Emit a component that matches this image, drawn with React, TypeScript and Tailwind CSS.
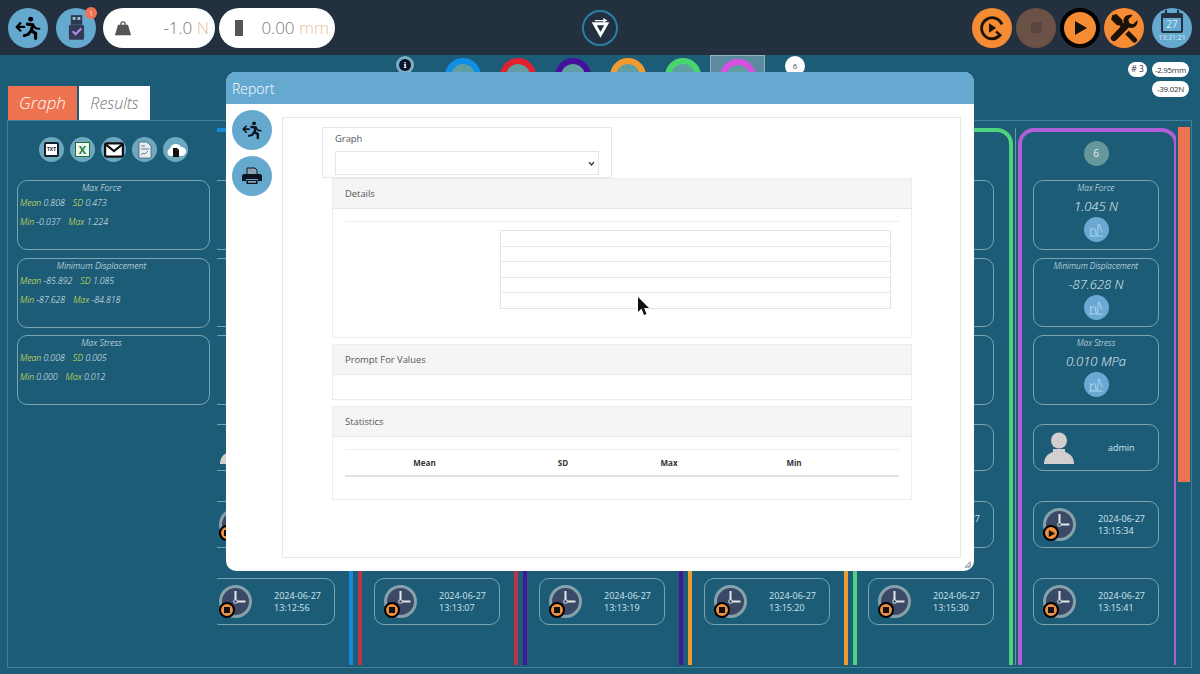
import { Fragment } from "react";

const rings = [
  "border-[#0f8fe6]",
  "border-[#e3202f]",
  "border-[#45109c]",
  "border-[#f39a2d]",
  "border-[#47d66e]",
  "border-[#d94fe2]",
];

const tints = [
  "border-[#1189dc]",
  "border-[#b8354a]",
  "border-[#43179a]",
  "border-[#ef9a33]",
  "border-[#4ed47f]",
  "border-[#b05fd6]",
];

const columns = [
  { force: "0.808 N", disp: "-85.892 N", stress: "0.008 MPa", start: "13:12:44", stop: "13:12:56", state: "stop" },
  { force: "1.224 N", disp: "-84.818 N", stress: "0.012 MPa", start: "13:12:58", stop: "13:13:07", state: "stop" },
  { force: "0.902 N", disp: "-85.310 N", stress: "0.009 MPa", start: "13:13:09", stop: "13:13:19", state: "stop" },
  { force: "-0.037 N", disp: "-86.204 N", stress: "0.000 MPa", start: "13:15:02", stop: "13:15:20", state: "stop" },
  { force: "0.873 N", disp: "-85.472 N", stress: "0.008 MPa", start: "13:15:22", stop: "13:15:30", state: "stop" },
  { force: "1.045 N", disp: "-87.628 N", stress: "0.010 MPa", start: "13:15:34", stop: "13:15:41", state: "play" },
];

const stats = [
  { title: "Max Force", mean: "0.808", sd: "0.473", min: "-0.037", max: "1.224" },
  { title: "Minimum Displacement", mean: "-85.892", sd: "1.085", min: "-87.628", max: "-84.818" },
  { title: "Max Stress", mean: "0.008", sd: "0.005", min: "0.000", max: "0.012" },
];

function ExitIcon({ className }: { className?: string }) {
  return (
    <svg viewBox="0 0 24 24" className={className} fill="none" stroke="currentColor" strokeLinecap="round" strokeLinejoin="round">
      <circle cx="14.5" cy="4" r="2.3" fill="currentColor" stroke="none" />
      <path d="M11.5 8.5l5 .5-1.5 5.5 4 2.5v4.5" strokeWidth="3" />
      <path d="M14.5 15l-2.5 3-3.5 1" strokeWidth="2.6" />
      <path d="M17 10l2.5 2.5 3 .2" strokeWidth="2" />
      <path d="M1.5 11h7M5 7.5L1.5 11 5 14.5" strokeWidth="2" />
    </svg>
  );
}

function ToolsIcon() {
  return (
    <svg viewBox="0 0 28 28" className="w-[30px] h-[30px]" fill="#1c1208">
      <path d="M26.500 6.500l-4 4-3.500-1-1-3.500 4-4c-3-1-6 0-7.500 2-1.200 1.800-1.300 3.800-.6 5.500L2.500 21.400a2.900 2.900 0 0 0 4.100 4.100L18.500 13.600c1.700.7 3.700.6 5.500-.6 2-1.500 3-3.500 2.500-6.500z" />
      <path d="M3 2l4-1 5.500 5.500v2l5 5-3 3-5-5h-2L2 6z" />
      <path d="M18.500 16.500l7 7a2.400 2.400 0 0 1-3.400 3.400l-7-7z" />
    </svg>
  );
}

function ChartIcon() {
  return (
    <svg viewBox="0 0 24 24" className="w-[18px] h-[18px] text-[#c4e4f4]" fill="none" stroke="currentColor" strokeWidth="1">
      <path d="M3 20h18M5 20V9M5 12c3 0 3-2 5-2s1 9 3 9 1-15 3-15 1 9 5 10" />
    </svg>
  );
}

function RoundIcon({ children }: { children: React.ReactNode }) {
  return <div className="w-[25px] h-[25px] rounded-full bg-[#6ea8bf] flex items-center justify-center">{children}</div>;
}

function Clock({ state }: { state: string }) {
  return (
    <div className="relative w-[33px] h-[33px] shrink-0 rounded-full border-[3px] border-[#87a1ab] bg-[#3a4a66]">
      <svg viewBox="0 0 27 27" className="w-full h-full" fill="none">
        <path d="M13.5 3v10.500h10" stroke="#e3e8ea" strokeWidth="2" />
        <circle cx="13.5" cy="13.5" r="1.8" fill="#3a4a66" stroke="#e3e8ea" />
      </svg>
      <div className="absolute -left-[3px] top-[14px] w-[16px] h-[16px] rounded-full bg-[#f0903f] border-2 border-black flex items-center justify-center">
        {state === "play" ? (
          <svg viewBox="0 0 10 10" className="w-[9px] h-[9px]">
            <path d="M2 1l7 4-7 4z" fill="#111" />
          </svg>
        ) : (
          <div className="w-[6px] h-[6px] bg-[#111]" />
        )}
      </div>
    </div>
  );
}

function TimeCard({ time, state }: { time: string; state: string }) {
  return (
    <div className="h-[47px] w-[126px] rounded-[10px] border border-[#7aa5ae] flex items-center pl-[9px]">
      <Clock state={state} />
      <div className="ml-[22px] text-[9px] leading-[12px] text-[#cfe6ee]">
        <div>2024-06-27</div>
        <div>{time}</div>
      </div>
    </div>
  );
}

function ValueCard({ title, value, height }: { title: string; value: string; height: string }) {
  return (
    <div className={`${height} w-[126px] rounded-[10px] border border-[#7aa5ae] flex flex-col items-center italic font-light text-[#e4f3f8]`}>
      <div className="text-[8.25px] leading-[12px] mt-[1px]">{title}</div>
      <div className="text-[13px] leading-[18px] mt-[3px]">{value}</div>
      <div className="mt-[2px] w-[25px] h-[25px] rounded-full bg-[#6aa9d3] flex items-center justify-center">
        <ChartIcon />
      </div>
    </div>
  );
}

function Column({ index, data }: { index: number; data: (typeof columns)[number] }) {
  return (
    <div
      className={`w-[160px] h-[537px] shrink-0 border-4 border-b-0 rounded-t-[16px] flex flex-col ${tints[index]} ${
        index === 0 ? "-ml-[24px]" : "ml-[5px]"
      } ${index < 4 ? "pl-[12px]" : "pl-[11px]"}`}
    >
      <div className="mt-[9px] w-[126px] flex justify-center">
        <div className="w-[25px] h-[25px] rounded-full bg-[#66979c] text-[#e5f1f0] text-[10px] flex items-center justify-center">
          {index + 1}
        </div>
      </div>
      <div className="mt-[14px]">
        <ValueCard title="Max Force" value={data.force} height="h-[70px]" />
      </div>
      <div className="mt-[8px]">
        <ValueCard title="Minimum Displacement" value={data.disp} height="h-[69px]" />
      </div>
      <div className="mt-[8px]">
        <ValueCard title="Max Stress" value={data.stress} height="h-[70px]" />
      </div>
      <div className="mt-[19px] h-[47px] w-[126px] rounded-[10px] border border-[#7aa5ae] flex items-center pl-[9px]">
        <svg viewBox="0 0 32 32" className="w-[32px] h-[32px] text-[#d3cfcf]" fill="currentColor">
          <circle cx="16" cy="8.500" r="8" />
          <path d="M1 32c0-6 3-10 9-12v-3h12v3c6 2 9 6 9 12z" />
        </svg>
        <div className="ml-[33px] text-[9px] text-[#cfe6ee]">admin</div>
      </div>
      <div className="mt-[30px]">
        <TimeCard time={data.start} state={data.state} />
      </div>
      <div className="mt-[30px]">
        <TimeCard time={data.stop} state="stop" />
      </div>
    </div>
  );
}

function StatCard({ item }: { item: (typeof stats)[number] }) {
  return (
    <div className="h-[70px] w-[193px] rounded-[10px] border border-[#7aa5ae] italic font-light text-[8.75px] text-[#e8f4f8] mb-[7.5px] px-[2px]">
      <div className="text-center leading-[12px] mt-[1px] pr-[24px]">{item.title}</div>
      <div className="mt-[3px] leading-[13px] flex gap-[8px]">
        <span>
          <span className="text-[#e4f250]">Mean</span> {item.mean}
        </span>
        <span>
          <span className="text-[#e4f250]">SD</span> {item.sd}
        </span>
      </div>
      <div className="mt-[6px] leading-[13px] flex gap-[8px]">
        <span>
          <span className="text-[#e4f250]">Min</span> {item.min}
        </span>
        <span>
          <span className="text-[#e4f250]">Max</span> {item.max}
        </span>
      </div>
    </div>
  );
}

function PanelHead({ label }: { label: string }) {
  return (
    <div className="h-[30px] shrink-0 bg-[#f5f5f5] border-b border-[#e6e6e6] pl-[12px] pt-[1px] flex items-center text-[9.4px] text-[#555]">
      {label}
    </div>
  );
}

export default function App() {
  return (
    <div className="w-[1200px] h-[674px] overflow-hidden flex flex-col font-['Open_Sans',sans-serif]">
      <header className="h-[55px] shrink-0 bg-[#22303f] flex items-center pl-[8px] pr-[8px]">
        <div className="w-[40px] h-[40px] rounded-full bg-[#65a9cf] flex items-center justify-center text-black">
          <ExitIcon className="w-[26px] h-[26px]" />
        </div>
        <div className="relative ml-[8px] w-[40px] h-[40px] rounded-full bg-[#65a9cf] flex items-center justify-center">
          <svg viewBox="0 0 20 28" className="w-[19px] h-[27px]">
            <rect x="4" y="1" width="12" height="10" fill="#2e3a4c" />
            <rect x="6" y="3" width="3" height="3" fill="#9fc6d8" />
            <rect x="11" y="3" width="3" height="3" fill="#9fc6d8" />
            <rect x="2" y="11" width="16" height="16" rx="2" fill="#343a56" />
            <path d="M6 18l3 3 6-6" fill="none" stroke="#b08be0" strokeWidth="2.2" />
          </svg>
          <div className="absolute right-[-1px] top-[-1px] w-[12px] h-[12px] rounded-full bg-[#ee7350] text-[8px] leading-[12px] text-center text-[#fde]">
            1
          </div>
        </div>
        <div className="ml-[7px] w-[112px] h-[40px] rounded-full bg-white flex items-center pl-[11px] pr-[6px]">
          <svg viewBox="0 0 20 20" className="w-[18px] h-[18px] text-[#555]" fill="currentColor" fillRule="evenodd">
            <path d="M7 5.500a3 3 0 1 1 6 0v1h2.500L19 18H1L4.500 6.500H7zM8.500 6.500h3v-1a1.500 1.500 0 0 0-3 0z" />
          </svg>
          <div className="ml-auto text-[17px] font-light text-[#777]">
            -1.0 <span className="text-[#eabf9c]">N</span>
          </div>
        </div>
        <div className="ml-[4px] w-[116px] h-[40px] rounded-full bg-white flex items-center pl-[16px] pr-[6px]">
          <div className="w-[8px] h-[16px] bg-[#555]" />
          <div className="ml-auto text-[17px] font-light text-[#777]">
            0.00 <span className="text-[#eabf9c]">mm</span>
          </div>
        </div>
        <div className="ml-[247px] w-[36px] h-[36px] rounded-full border-2 border-[#2a7fa8] flex items-center justify-center">
          <svg viewBox="0 0 20 20" className="w-[21px] h-[21px]" fill="none" stroke="#fff">
            <path d="M4.500 3.500h10M12.500 1.500l3 2-3 1" strokeWidth="1.1" />
            <path d="M4 6.500h12L10 17z" strokeWidth="2.8" strokeLinejoin="miter" />
          </svg>
        </div>
        <div className="ml-auto w-[40px] h-[40px] rounded-full bg-[#f58b33] flex items-center justify-center">
          <svg viewBox="0 0 24 24" className="w-[28px] h-[28px]" fill="none" stroke="#1c1208" strokeWidth="2.4">
            <path d="M19 18a9 9 0 1 1 1.500-9" />
            <path d="M14 21l5-3-3.500-3" strokeWidth="2" />
            <path d="M9.500 8l6 4-6 4z" fill="#1c1208" stroke="none" />
          </svg>
        </div>
        <div className="ml-[4px] w-[40px] h-[40px] rounded-full bg-[#6a5247] flex items-center justify-center">
          <div className="w-[11px] h-[11px] bg-[#5a463f]" />
        </div>
        <div className="ml-[4px] w-[40px] h-[40px] rounded-full bg-[#f58b33] border-[4px] border-black flex items-center justify-center">
          <svg viewBox="0 0 20 20" className="w-[20px] h-[20px]">
            <path d="M5 3l12 7-12 7z" fill="#111" />
          </svg>
        </div>
        <div className="ml-[4px] w-[40px] h-[40px] rounded-full bg-[#f58b33] flex items-center justify-center">
          <ToolsIcon />
        </div>
        <div className="ml-[8px] w-[40px] h-[40px] rounded-full bg-[#65a9cf] flex flex-col items-center justify-center text-[#d7ecf7]">
          <div className="relative w-[22px] h-[20px] border-2 border-[#22303f] rounded-[2px] border-t-[5px] text-[10px] leading-[12px] text-center">
            27
            <div className="absolute -top-[8px] left-[2px] w-[2px] h-[4px] bg-[#22303f]" />
            <div className="absolute -top-[8px] right-[2px] w-[2px] h-[4px] bg-[#22303f]" />
          </div>
          <div className="text-[7px] leading-[9px]">13:31:21</div>
        </div>
      </header>

      <main className="relative flex-1 bg-[#1d5c77] flex flex-col">
        <div className="h-[65px] shrink-0 flex pl-[8px] pr-[11px]">
          <div className="self-end flex gap-[2px] w-[142px] h-[34px]">
            <div className="w-[69px] bg-[#ee7350] text-white italic font-light text-[17px] flex items-center justify-center">Graph</div>
            <div className="w-[71px] bg-white text-[#777] italic font-light text-[16px] flex items-center justify-center">Results</div>
          </div>
          <div className="ml-[246px] mt-[1px] w-[18px] h-[18px] rounded-full bg-[#7eaec6] flex items-center justify-center">
            <div className="w-[12px] h-[12px] rounded-full bg-[#06142a] text-white text-[8px] leading-[12px] font-bold text-center font-['DejaVu_Serif',serif]">
              i
            </div>
          </div>
          <div className="ml-[21px] flex">
            {rings.map((ring, i) => (
              <div
                key={ring}
                className={`w-[55px] h-[65px] flex justify-center ${i === 5 ? "bg-[#5c8ba0] border border-[#8fb0bd] border-b-0" : ""}`}
              >
                <div className={`mt-[3px] w-[36px] h-[36px] rounded-full border-[6px] bg-[#5f9ea3] ${ring}`} />
              </div>
            ))}
          </div>
          <div className="ml-[20px] mt-[1px] w-[20px] h-[20px] rounded-full bg-white text-[#555] text-[8px] flex items-center justify-center">6</div>
          <div className="ml-auto mt-[7px] flex gap-[5px] items-start">
            <div className="w-[19px] h-[15px] rounded-full bg-white text-[#333] text-[8.5px] flex items-center justify-center"># 3</div>
            <div className="flex flex-col gap-[4px]">
              <div className="w-[37px] h-[15px] rounded-full bg-white text-[#333] text-[8px] tracking-[-0.3px] flex items-center justify-center">-2.95mm</div>
              <div className="w-[37px] h-[16px] rounded-full bg-white text-[#333] text-[8px] tracking-[-0.3px] flex items-center justify-center">-39.02N</div>
            </div>
          </div>
        </div>

        <div className="ml-[7px] w-[1185px] h-[548px] border border-[#3f7f97] flex">
          <div className="w-[209px] shrink-0 pl-[9px]">
            <div className="flex gap-[6px] pl-[22px] pt-[16px] h-[59px]">
              <RoundIcon>
                <div className="w-[15px] h-[15px] rounded-[2px] border-2 border-[#14202e] bg-white text-[5px] font-bold leading-[11px] text-center text-[#14202e]">TXT</div>
              </RoundIcon>
              <RoundIcon>
                <div className="w-[15px] h-[15px] border border-[#1f6f3c] bg-[#eaf6ee] text-[11px] font-bold leading-[13px] text-center text-[#1f7a43]">X</div>
              </RoundIcon>
              <RoundIcon>
                <svg viewBox="0 0 18 14" className="w-[20px] h-[16px]" fill="#fff" stroke="#111" strokeWidth="2">
                  <rect x="1" y="1" width="16" height="12" rx="1.500" />
                  <path d="M1.500 2l7.500 6 7.500-6" fill="none" />
                </svg>
              </RoundIcon>
              <RoundIcon>
                <svg viewBox="0 0 14 18" className="w-[14px] h-[18px]" fill="#e8f0f4" stroke="#465a70" strokeWidth="0.8">
                  <path d="M1 1h8l4 4v12H1z" />
                  <path d="M3 5h4M3 8h8M3 14l2-2 2 1 3-3" fill="none" />
                </svg>
              </RoundIcon>
              <RoundIcon>
                <svg viewBox="0 0 20 16" className="w-[20px] h-[16px]">
                  <path d="M4 14a4 4 0 0 1 0-7.500 6 6 0 0 1 11-1.500 4.500 4.500 0 0 1 1 9z" fill="#fff" />
                  <path d="M7 6h4l2 2v7H7z" fill="#111" />
                </svg>
              </RoundIcon>
            </div>
            {stats.map((item) => (
              <StatCard key={item.title} item={item} />
            ))}
          </div>
          <div className="w-[959px] shrink-0 overflow-hidden pt-[7px] flex">
            {columns.map((data, i) => (
              <Fragment key={i}>
                {i === 5 && <div className="w-px h-[537px] shrink-0 ml-[2px] -mr-[3px] bg-[#6b97a5]" />}
                <Column index={i} data={data} />
              </Fragment>
            ))}
          </div>
          <div className="ml-[2px] mt-[6px] w-[12px] h-[355px] bg-[#ee7350]" />
        </div>

        {/* report dialog */}
        <div className="absolute left-[226px] top-[17px] w-[748px] h-[499px] rounded-[10px] overflow-hidden bg-white flex flex-col">
          <div className="h-[32px] shrink-0 bg-[#65a9d0] pl-[6px] flex items-center text-[14px] font-light text-white">Report</div>
          <div className="flex-1 flex relative">
            <div className="w-[56px] shrink-0 pl-[6px] pt-[6px] flex flex-col gap-[6px]">
              <div className="w-[40px] h-[40px] rounded-full bg-[#65a9cf] flex items-center justify-center text-[#0d1620]">
                <ExitIcon className="w-[20px] h-[20px]" />
              </div>
              <div className="w-[40px] h-[40px] rounded-full bg-[#65a9cf] flex items-center justify-center">
                <svg viewBox="0 0 20 18" className="w-[20px] h-[18px]">
                  <path d="M5 1h8l2 2v5H5z" fill="#8da3b3" stroke="#0d1620" strokeWidth="1" />
                  <path d="M2 7h16a2 2 0 0 1 2 2v5h-4v-2H4v2H0V9a2 2 0 0 1 2-2z" fill="#0d1620" />
                  <path d="M4.500 13h11v4h-11z" fill="#0d1620" />
                  <path d="M6 14h8v1.800H6z" fill="#8da3b3" />
                </svg>
              </div>
            </div>
            <div className="mt-[13px] mb-[13px] w-[679px] border border-[#e8e8e8] pl-[39px] pt-[9px]">
              <div className="w-[290px] h-[51px] border border-[#e6e6e6] pl-[12px] pt-[4px]">
                <div className="text-[9.4px] leading-[14px] text-[#555]">Graph</div>
                <div className="mt-[5px] w-[264px] h-[24px] border border-[#e6e6e6] flex items-center justify-end pr-[3px]">
                  <svg viewBox="0 0 10 10" className="w-[7px] h-[7px]" fill="none" stroke="#333" strokeWidth="2">
                    <path d="M1.500 3L5 7l3.500-4" />
                  </svg>
                </div>
              </div>
              <div className="ml-[10px] w-[580px]">
                <div className="h-[160px] border border-[#ececec] flex flex-col">
                  <PanelHead label="Details" />
                  <div className="mx-[12px] mt-[12px] border-t border-[#eeeeee]" />
                  <div className="ml-[167px] mt-[8px] w-[391px] h-[79px] border border-[#e4e4e4] flex flex-col">
                    {[0, 1, 2, 3, 4].map((row) => (
                      <div key={row} className="flex-1 border-b border-[#e6e6e6] last:border-b-0" />
                    ))}
                  </div>
                </div>
                <div className="mt-[6px] h-[56px] border border-[#ececec] flex flex-col">
                  <PanelHead label="Prompt For Values" />
                </div>
                <div className="mt-[6px] h-[94px] border border-[#ececec] flex flex-col">
                  <PanelHead label="Statistics" />
                  <div className="mx-[12px] mt-[12px] h-[28px] border-t border-b-2 border-t-[#eeeeee] border-b-[#e2e2e2] flex items-center text-[8px] font-bold text-[#333]">
                    <span className="w-[159px] text-center">Mean</span>
                    <span className="w-[118px] text-center">SD</span>
                    <span className="w-[94px] text-center">Max</span>
                    <span className="w-[156px] text-center">Min</span>
                  </div>
                </div>
              </div>
            </div>
            <svg viewBox="0 0 8 8" className="absolute right-[3px] bottom-[3px] w-[7px] h-[7px]" fill="none" stroke="#666" strokeWidth="0.8">
              <path d="M1 7l6-6v6zM4 7l3-3" />
            </svg>
          </div>
        </div>

        {/* mouse pointer from the recording */}
        <svg viewBox="0 0 12 20" className="absolute left-[638px] top-[242px] w-[12px] h-[20px]">
          <path d="M0 0v15l3.500-3.500 2.500 6.500 2.500-1-2.500-6h5z" fill="#111" />
        </svg>
      </main>
    </div>
  );
}
